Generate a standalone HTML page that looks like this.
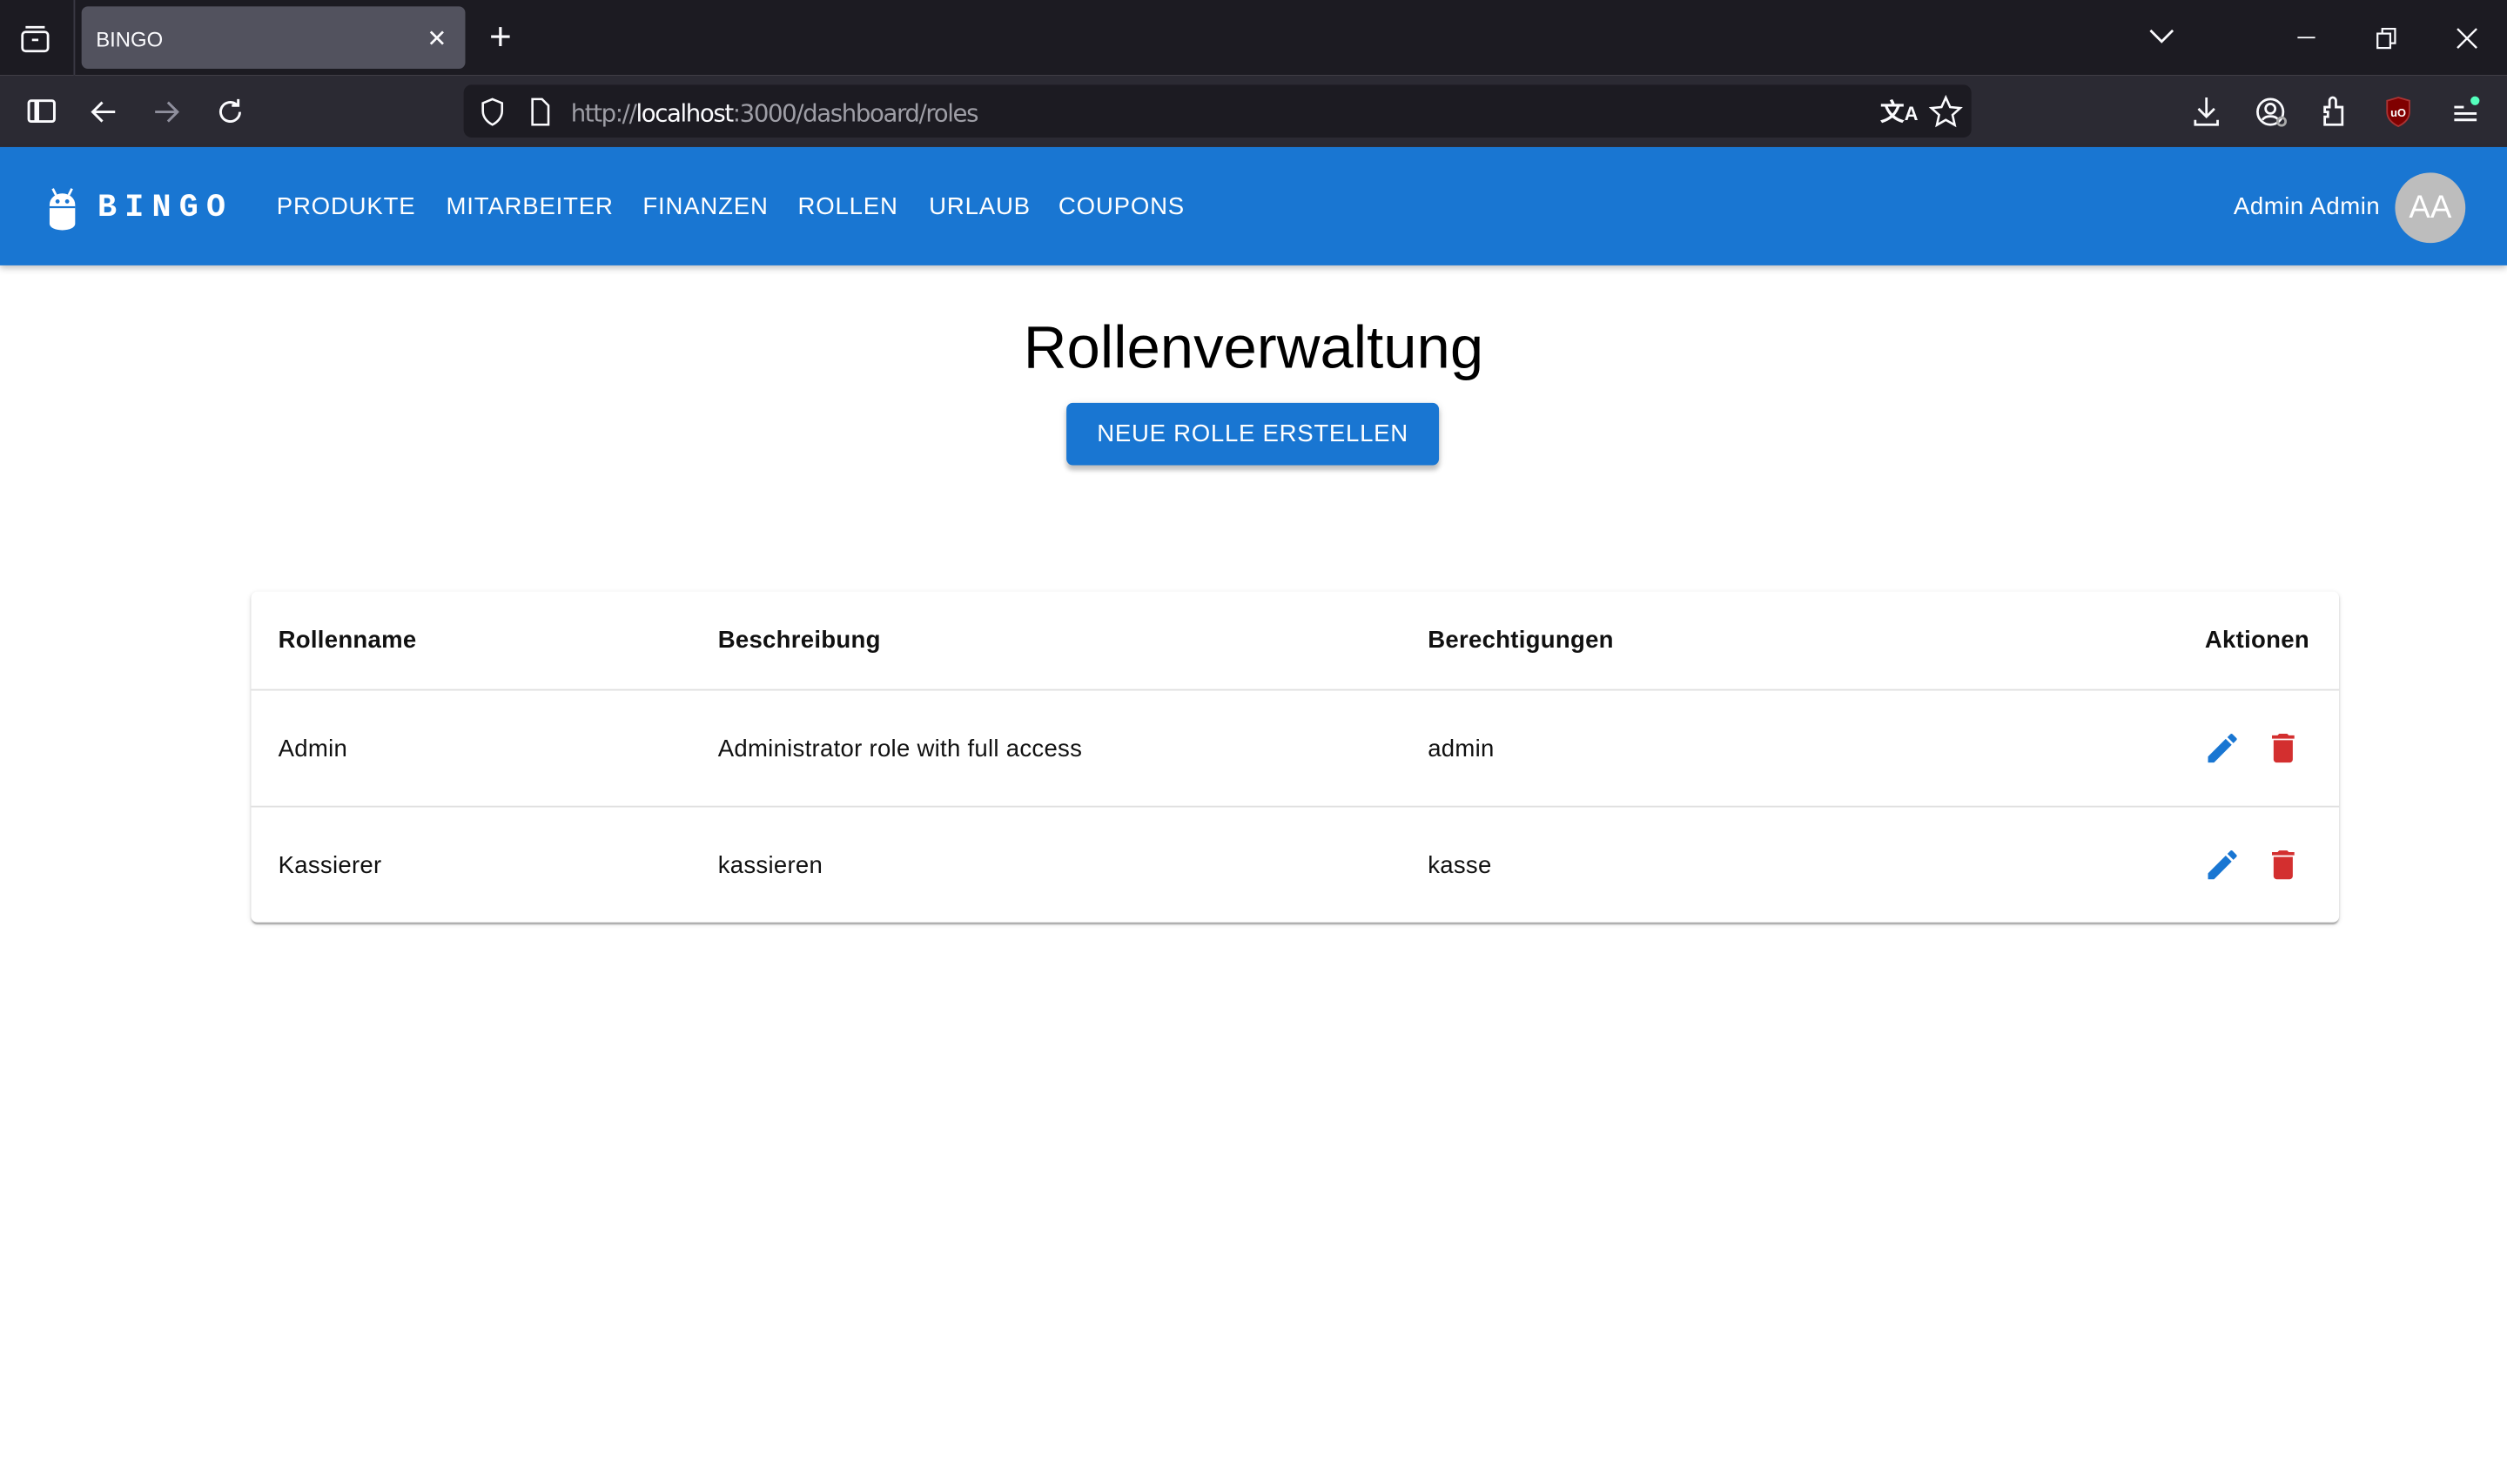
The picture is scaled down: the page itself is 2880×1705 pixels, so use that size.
<!DOCTYPE html>
<html><head><meta charset="utf-8"><style>
html,body{margin:0;padding:0;width:2880px;height:1704px;overflow:hidden;background:#fff}
#w{position:absolute;left:0;top:0;width:1568px;height:928px;transform:scale(1.836735);transform-origin:0 0;font-family:"Liberation Sans",Arial,sans-serif}
.a{position:absolute}
.nav{color:#fff;font-size:15px;top:121px;letter-spacing:.45px}
.th{font-weight:bold;font-size:15px;color:#111;letter-spacing:.15px}
.td{font-size:15px;color:#111;letter-spacing:.15px}
svg{position:absolute}
</style></head><body><div id="w">
<div class="a" style="left:0;top:0;width:1568px;height:47px;background:#1c1b22"></div>
<div class="a" style="left:46px;top:0;width:1px;height:47px;background:#3a3944"></div>
<svg style="left:12px;top:15px" width="20" height="20" viewBox="0 0 20 20" fill="none" stroke="#fbfbfe" stroke-width="1.5"><rect x="2" y="5" width="16" height="12" rx="2"/><path d="M4 2h12M8 10h4"/></svg>
<div class="a" style="left:51px;top:4px;width:240px;height:39px;background:#52525e;border-radius:4px"></div>
<div class="a" style="left:60px;top:17px;color:#fbfbfe;font-size:13px">BINGO</div>
<div class="a" style="left:267px;top:15px;color:#fbfbfe;font-size:15px">✕</div>
<div class="a" style="left:306px;top:10px;color:#fbfbfe;font-size:24px;font-weight:300">+</div>
<svg style="left:1343px;top:16px" width="18" height="14" viewBox="0 0 18 14" fill="none" stroke="#fbfbfe" stroke-width="1.5"><path d="M2 3l7 7 7-7"/></svg>
<div class="a" style="left:1437px;top:23px;width:11px;height:1px;background:#fbfbfe"></div>
<svg style="left:1486px;top:17px" width="14" height="14" viewBox="0 0 14 14" fill="none" stroke="#fbfbfe" stroke-width="1.2"><rect x="1" y="4" width="8" height="9"/><path d="M4 4V1h8v9H9"/></svg>
<svg style="left:1536px;top:17px" width="14" height="14" viewBox="0 0 14 14" stroke="#fbfbfe" stroke-width="1.3"><path d="M1 1l12 12M13 1L1 13"/></svg>
<div class="a" style="left:0;top:47px;width:1568px;height:45px;background:#2b2a33"></div>
<svg style="left:16px;top:60px" width="20" height="20" viewBox="0 0 20 20" fill="none" stroke="#fbfbfe" stroke-width="1.6"><rect x="2" y="3" width="16" height="13" rx="1.5"/><path d="M7 3v13" stroke-width="3"/></svg>
<svg style="left:55px;top:60px" width="20" height="20" viewBox="0 0 20 20" fill="none" stroke="#fbfbfe" stroke-width="1.6"><path d="M17 10H4M9 4l-6 6 6 6"/></svg>
<svg style="left:94px;top:60px" width="20" height="20" viewBox="0 0 20 20" fill="none" stroke="#8f8f9d" stroke-width="1.6"><path d="M3 10h13M11 4l6 6-6 6"/></svg>
<svg style="left:134px;top:60px" width="20" height="20" viewBox="0 0 20 20" fill="none" stroke="#fbfbfe" stroke-width="1.6"><path d="M16 10a6 6 0 1 1-2-4.5M15 2v4h-4"/></svg>
<div class="a" style="left:290px;top:53px;width:943px;height:33px;background:#1c1b22;border-radius:5px"></div>
<svg style="left:298px;top:60px" width="20" height="20" viewBox="0 0 20 20" fill="none" stroke="#fbfbfe" stroke-width="1.4"><path d="M10 2l6 2.5v5c0 4-3 7-6 8.5-3-1.5-6-4.5-6-8.5v-5z"/></svg>
<svg style="left:329px;top:60px" width="18" height="20" viewBox="0 0 18 20" fill="none" stroke="#fbfbfe" stroke-width="1.4"><path d="M4 2h6l4 4v12H4z"/></svg>
<div class="a" style="left:357px;top:62px;font-size:15px;color:#9e9ea6;font-family:'DejaVu Sans',sans-serif;letter-spacing:-.75px">http://<span style="color:#fbfbfe">localhost</span>:3000/dashboard/roles</div>
<div class="a" style="left:1176px;top:59px;color:#fbfbfe;font-size:15px;font-weight:bold">文<span style="font-size:12px">A</span></div>
<svg style="left:1206px;top:59px" width="22" height="22" viewBox="0 0 22 22" fill="none" stroke="#fbfbfe" stroke-width="1.4"><path d="M11 2l2.7 6 6.3.6-4.8 4.3 1.4 6.3L11 16l-5.6 3.2 1.4-6.3L2 8.6 8.3 8z"/></svg>
<svg style="left:1370px;top:59px" width="20" height="22" viewBox="0 0 20 22" fill="none" stroke="#fbfbfe" stroke-width="1.5"><path d="M10 2v12M5 9l5 5 5-5M3 16v3h14v-3"/></svg>
<svg style="left:1410px;top:59px" width="22" height="22" viewBox="0 0 22 22" fill="none" stroke="#fbfbfe" stroke-width="1.5"><circle cx="10" cy="11" r="8"/><circle cx="10" cy="9" r="3"/><path d="M5 16c2-3 8-3 10 0"/><circle cx="17" cy="17" r="2.5" stroke="#aaa"/></svg>
<svg style="left:1450px;top:59px" width="20" height="22" viewBox="0 0 20 22" fill="none" stroke="#fbfbfe" stroke-width="1.5"><path d="M4 19h11V8h-4V4a2 2 0 0 0-4 0v4H4v3h2v3H4z"/></svg>
<svg style="left:1491px;top:60px" width="18" height="20" viewBox="0 0 18 20"><path d="M9 1l7 2v7c0 4-3 7-7 9-4-2-7-5-7-9V3z" fill="#800000" stroke="#a33" /><text x="9" y="13" font-size="7" fill="#fff" text-anchor="middle" font-family="Liberation Sans" font-weight="bold">uO</text></svg>
<svg style="left:1533px;top:59px" width="22" height="22" viewBox="0 0 22 22" fill="none" stroke="#fbfbfe" stroke-width="1.6"><path d="M2 8h6M2 12h14M2 16h14"/><circle cx="15" cy="4" r="2.8" fill="#54ffbd" stroke="none"/></svg>
<div class="a" style="left:0;top:92px;width:1568px;height:74px;background:#1976d2;box-shadow:0 2px 4px rgba(0,0,0,.25)"></div>
<svg style="left:29px;top:116px" width="20" height="28" viewBox="0 0 20 28" fill="#fff"><path d="M4 2l2 4M16 2l-2 4" stroke="#fff" stroke-width="1.5"/><path d="M2 12a8 7 0 0 1 16 0v12a8 4 0 0 1-16 0z"/><circle cx="7" cy="10" r="1.3" fill="#1976d2"/><circle cx="13" cy="10" r="1.3" fill="#1976d2"/><rect x="2" y="13" width="16" height="1.2" fill="#1976d2"/></svg>
<div class="a" style="left:61px;top:119px;color:#fff;font-family:'Liberation Mono',monospace;font-weight:bold;font-size:20px;letter-spacing:5px">BINGO</div>
<div class="a nav" style="left:173px">PRODUKTE</div>
<div class="a nav" style="left:279px">MITARBEITER</div>
<div class="a nav" style="left:402px">FINANZEN</div>
<div class="a nav" style="left:499px">ROLLEN</div>
<div class="a nav" style="left:581px">URLAUB</div>
<div class="a nav" style="left:662px">COUPONS</div>
<div class="a" style="left:1397px;top:121px;color:#fff;font-size:15px;letter-spacing:.3px">Admin Admin</div>
<div class="a" style="left:1498px;top:108px;width:44px;height:44px;border-radius:50%;background:#bdbdbd;color:#fff;font-size:20px;text-align:center;line-height:44px">AA</div>
<div class="a" style="left:0;top:196px;width:1568px;text-align:center;font-size:37.5px;color:#000">Rollenverwaltung</div>
<div class="a" style="left:667px;top:252px;width:233px;height:39px;background:#1976d2;border-radius:4px;box-shadow:0 3px 3px rgba(0,0,0,.2),0 1px 5px rgba(0,0,0,.12);color:#fff;font-size:15px;text-align:center;line-height:39px;letter-spacing:.4px">NEUE ROLLE ERSTELLEN</div>
<div class="a" style="left:157px;top:370px;width:1306px;height:207px;background:#fff;border-radius:4px;box-shadow:0 2px 1px -1px rgba(0,0,0,.2),0 1px 1px rgba(0,0,0,.14),0 1px 3px rgba(0,0,0,.12)"></div>
<div class="a" style="left:157px;top:431px;width:1306px;height:1px;background:#e0e0e0"></div>
<div class="a" style="left:157px;top:504px;width:1306px;height:1px;background:#e0e0e0"></div>
<div class="a th" style="left:174px;top:392px">Rollenname</div>
<div class="a th" style="left:449px;top:392px">Beschreibung</div>
<div class="a th" style="left:893px;top:392px">Berechtigungen</div>
<div class="a th" style="left:1379px;top:392px">Aktionen</div>
<div class="a td" style="left:174px;top:460px">Admin</div>
<div class="a td" style="left:449px;top:460px">Administrator role with full access</div>
<div class="a td" style="left:893px;top:460px">admin</div>
<div class="a td" style="left:174px;top:533px">Kassierer</div>
<div class="a td" style="left:449px;top:533px">kassieren</div>
<div class="a td" style="left:893px;top:533px">kasse</div>
<svg style="left:1378px;top:456px" width="24" height="24" viewBox="0 0 24 24" fill="#1976d2"><path d="M3 17.25V21h3.75L17.81 9.94l-3.75-3.75zM20.71 7.04a1 1 0 0 0 0-1.41l-2.34-2.34a1 1 0 0 0-1.41 0l-1.83 1.83 3.75 3.75z"/></svg>
<svg style="left:1416px;top:456px" width="24" height="24" viewBox="0 0 24 24" fill="#d32f2f"><path d="M6 19c0 1.1.9 2 2 2h8c1.1 0 2-.9 2-2V7H6zM19 4h-3.5l-1-1h-5l-1 1H5v2h14z"/></svg>
<svg style="left:1378px;top:529px" width="24" height="24" viewBox="0 0 24 24" fill="#1976d2"><path d="M3 17.25V21h3.75L17.81 9.94l-3.75-3.75zM20.71 7.04a1 1 0 0 0 0-1.41l-2.34-2.34a1 1 0 0 0-1.41 0l-1.83 1.83 3.75 3.75z"/></svg>
<svg style="left:1416px;top:529px" width="24" height="24" viewBox="0 0 24 24" fill="#d32f2f"><path d="M6 19c0 1.1.9 2 2 2h8c1.1 0 2-.9 2-2V7H6zM19 4h-3.5l-1-1h-5l-1 1H5v2h14z"/></svg>
</div></body></html>
